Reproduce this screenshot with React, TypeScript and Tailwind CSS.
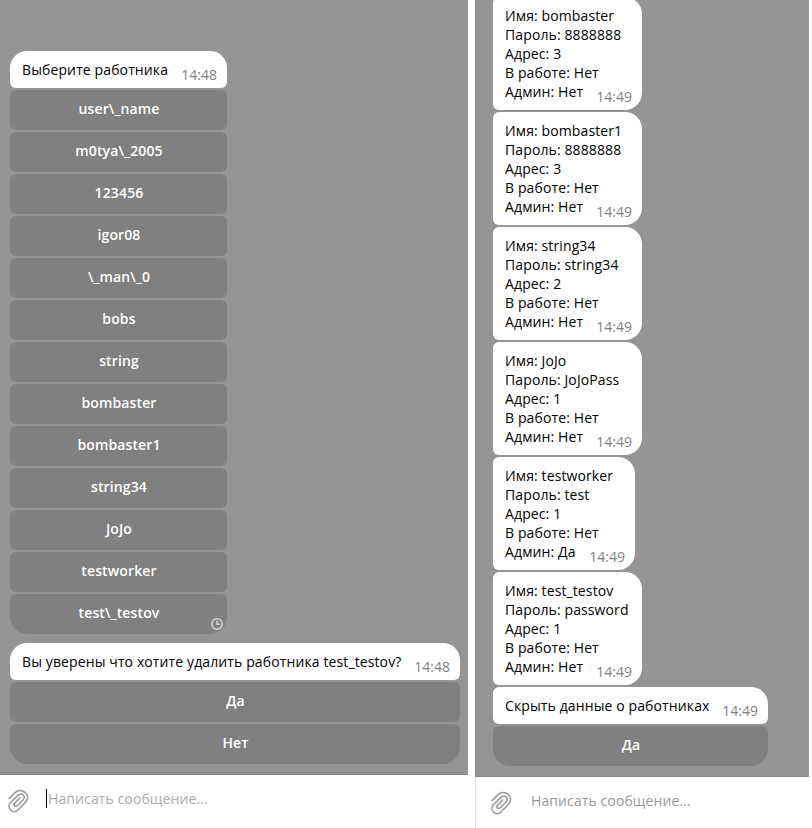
import type { ReactNode } from "react";

const names = [
  "user\\_name", "m0tya\\_2005", "123456", "igor08", "\\_man\\_0", "bobs", "string",
  "bombaster", "bombaster1", "string34", "JoJo", "testworker", "test\\_testov",
];

const workers = [
  { name: "bombaster", pass: "8888888", addr: 3, admin: "Нет" },
  { name: "bombaster1", pass: "8888888", addr: 3, admin: "Нет" },
  { name: "string34", pass: "string34", addr: 2, admin: "Нет" },
  { name: "JoJo", pass: "JoJoPass", addr: 1, admin: "Нет" },
  { name: "testworker", pass: "test", addr: 1, admin: "Да" },
  { name: "test_testov", pass: "password", addr: 1, admin: "Нет" },
];

function Bubble({ children, time, shape, width }: { children: ReactNode; time: string; shape: string; width: string }) {
  return (
    <div className={`flex shrink-0 items-end justify-between bg-white py-[9px] pl-3 pr-2.5 text-black ${shape} ${width}`}>
      <div className="w-0 whitespace-nowrap tracking-[0.115px]">{children}</div>
      <span className="-mb-[5px] text-[#808080]">{time}</span>
    </div>
  );
}

function Key({ label, last = false, children }: { label: string; last?: boolean; children?: ReactNode }) {
  return (
    <button
      className={`relative flex h-10 w-full shrink-0 items-center justify-center bg-[#808080] pb-[3px] pl-px font-[560] tracking-[0.13px] text-white ${
        last ? "rounded-t-[6px] rounded-b-[17px]" : "rounded-[6px]"
      }`}
    >
      {label}
      {children}
    </button>
  );
}

function Composer({ caret = false }: { caret?: boolean }) {
  return (
    <div className="flex h-[53px] items-start pl-2">
      <svg className="mt-[14px] h-6 w-[22px] shrink-0" viewBox="0 0 22 24" fill="none" stroke="#999999" strokeWidth="1.6" strokeLinecap="round">
        <path d="M1 9.1 7.4 3C13.6-2.2 23.1 5.2 18.1 12.2L10 20.6C5.2 25.4-2 18.8 2.4 13.4L10.2 5.8C14 2.6 18.2 7 15.2 10.4L9.4 16.3C7.2 18.2 4.8 15.8 6.4 13.8L11.6 8.7" transform="translate(0 .4)" />
      </svg>
      <div className="ml-4 flex items-center pt-[14px]">
        <span className={caret ? "h-[19px] w-px bg-black" : "h-[19px] w-px"} />
        <span className={caret ? "ml-px tracking-[0.1px] text-[#aaaaaa]" : "ml-px tracking-[0.1px] text-[#999999]"}>
          Написать сообщение...
        </span>
      </div>
    </div>
  );
}

export default function App() {
  return (
    <div className="flex h-[828px] w-[812px] overflow-hidden bg-white font-['Open_Sans',sans-serif] text-[14px] leading-[19px]">
      <section className="flex w-[468px] shrink-0 flex-col">
        <div className="flex h-[775px] shrink-0 flex-col border-b border-[#858585] bg-[#959595] pl-2.5 pt-[51px]">
          <div className="flex w-[217px] flex-col gap-0.5">
            <Bubble time="14:48" width="w-full" shape="rounded-t-[17px] rounded-b-[6px]">Выберите работника</Bubble>
            {names.map((n, i) => (
              <Key key={n} label={n} last={i === names.length - 1}>
                {i === names.length - 1 && (
                  <svg className="absolute bottom-1 right-1 h-3 w-3" viewBox="0 0 12 12" fill="none" stroke="#d6d6d6" strokeWidth="1.5">
                    <circle cx="6" cy="6" r="5.2" />
                    <path d="M6 2.8V6.2H8.8" />
                  </svg>
                )}
              </Key>
            ))}
          </div>
          <div className="mt-[9px] flex w-[450px] flex-col gap-0.5">
            <Bubble time="14:48" width="w-full" shape="rounded-t-[17px] rounded-b-[6px]">
              Вы уверены что хотите удалить работника test_testov?
            </Bubble>
            <Key label="Да" />
            <Key label="Нет" last />
          </div>
        </div>
        <Composer caret />
      </section>
      <section className="ml-[7px] flex w-[334px] shrink-0 flex-col border-l border-[#e4e4e4]">
        <div className="-ml-px flex h-[777px] shrink-0 flex-col justify-end gap-0.5 border-b border-l border-[#858585] bg-[#959595] pb-2.5 pl-[17px]">
          {workers.map((w) => (
            <Bubble key={w.name} time="14:49" width={w.admin === "Да" ? "w-[142px]" : "w-[149px]"} shape="rounded-l-[6px] rounded-r-[17px]">
              <p>Имя: {w.name}</p>
              <p>Пароль: {w.pass}</p>
              <p>Адрес: {w.addr}</p>
              <p>В работе: Нет</p>
              <p>Админ: {w.admin}</p>
            </Bubble>
          ))}
          <div className="flex w-[275px] shrink-0 flex-col gap-0.5">
            <Bubble time="14:49" width="w-full" shape="rounded-l-[6px] rounded-tr-[17px] rounded-br-[6px]">
              Скрыть данные о работниках
            </Bubble>
            <Key label="Да" last />
          </div>
        </div>
        <div className="pl-[7px]">
          <Composer />
        </div>
      </section>
    </div>
  );
}
